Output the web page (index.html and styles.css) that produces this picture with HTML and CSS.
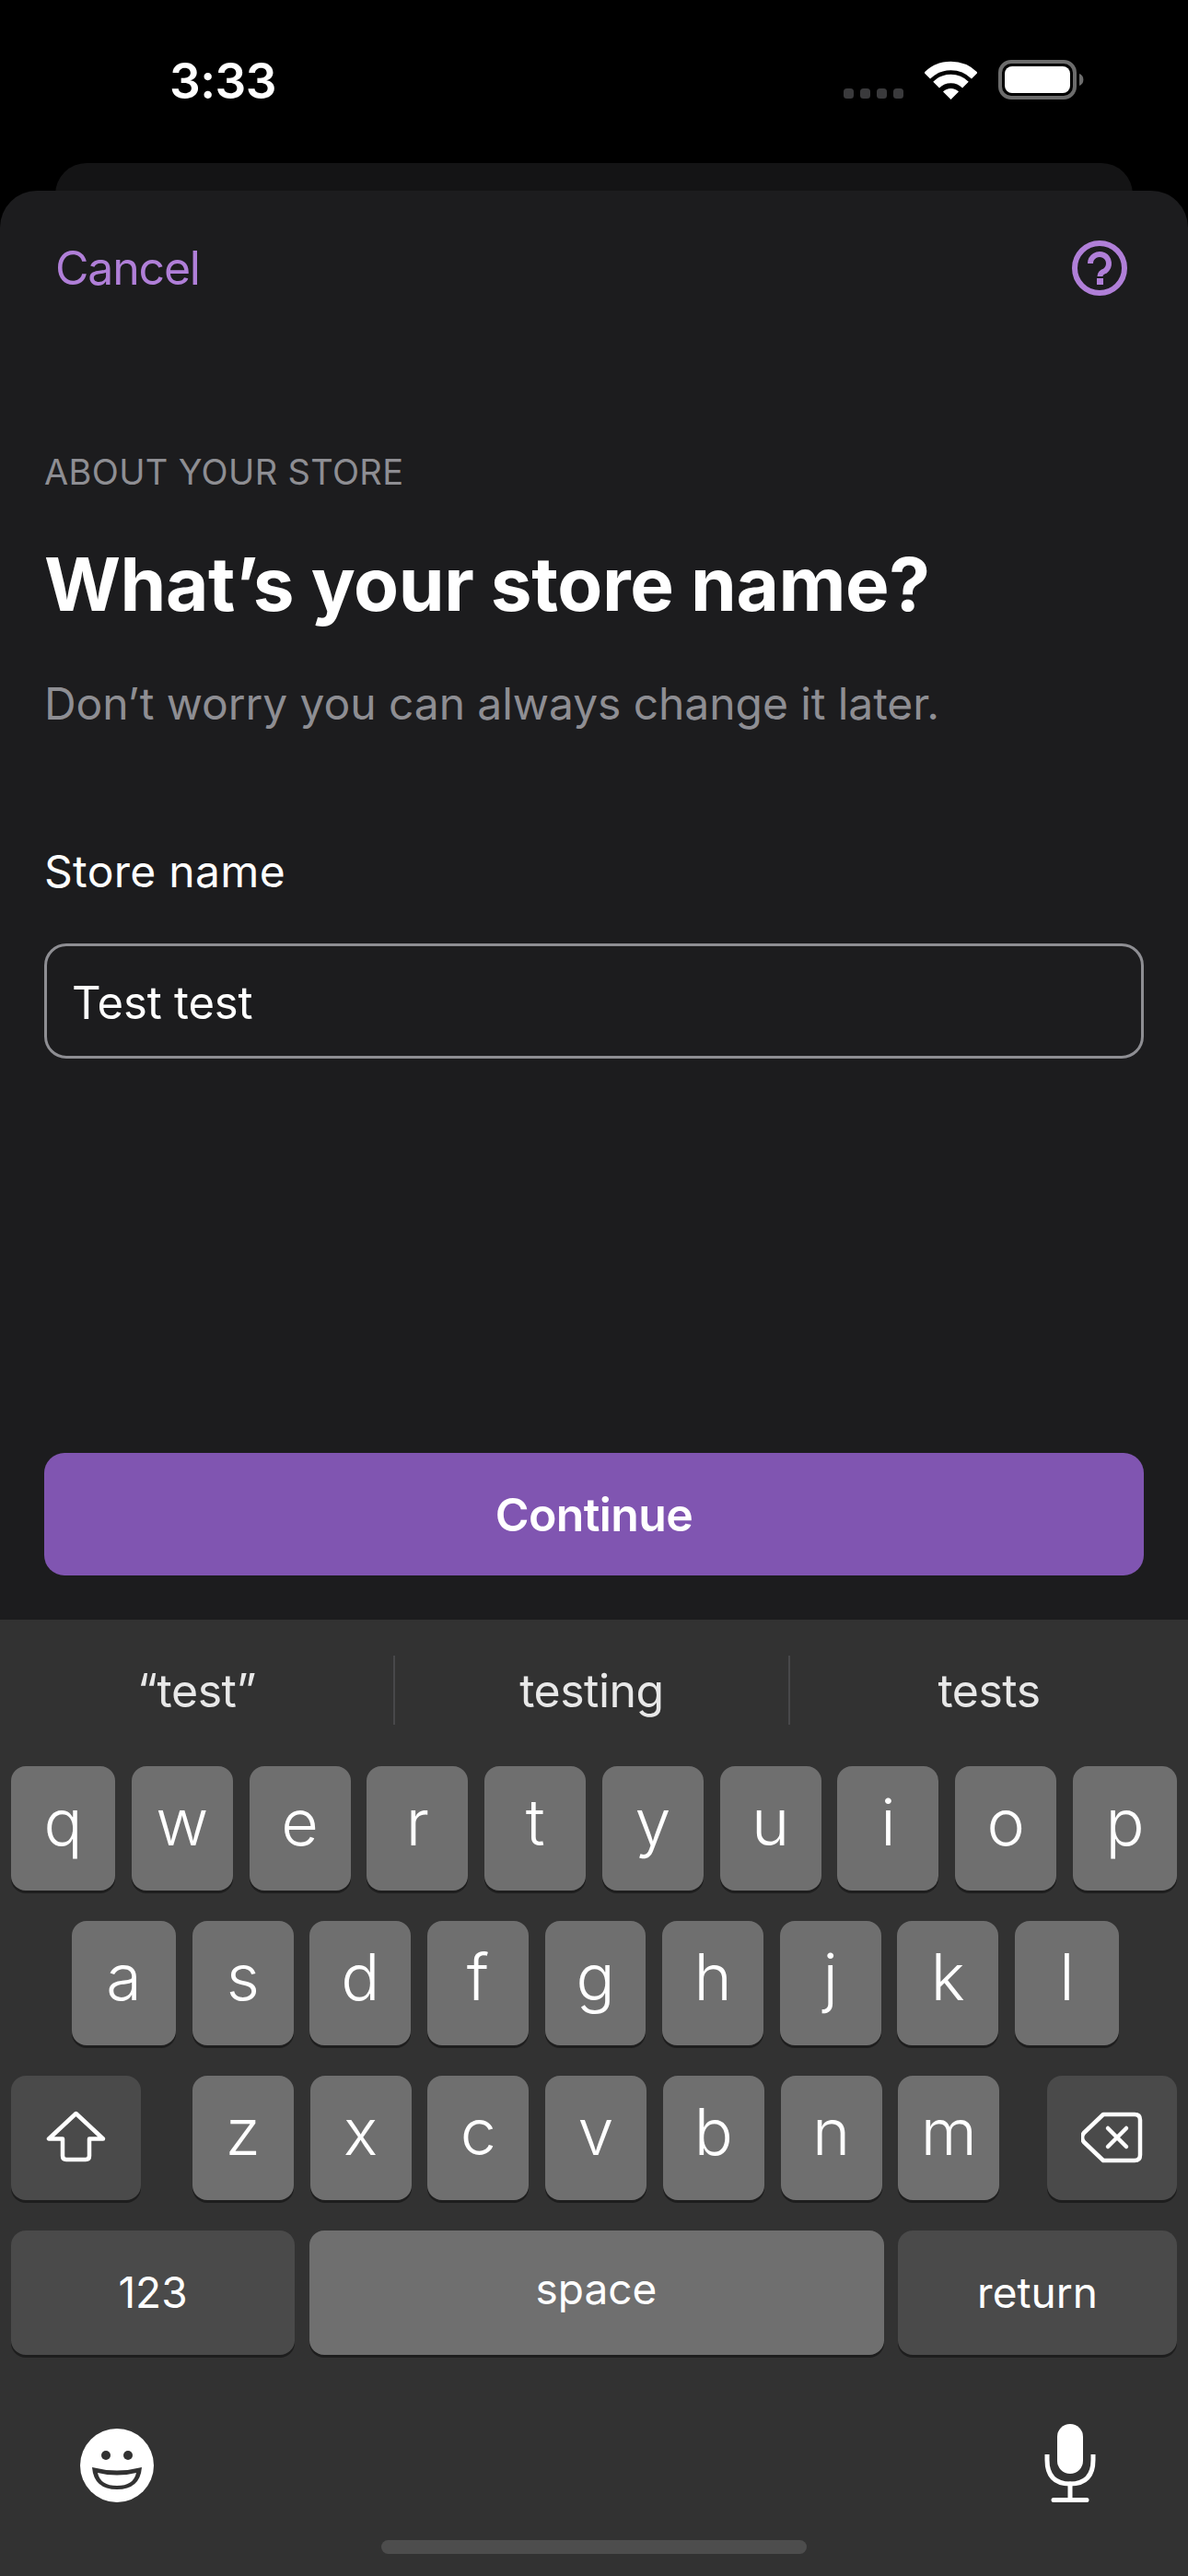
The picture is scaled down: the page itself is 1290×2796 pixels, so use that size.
FILE: index.html

```html
<!DOCTYPE html>
<html lang="en">
<head>
  <meta charset="UTF-8">
  <title>Store name</title>
  <link rel="stylesheet" href="styles.css">
</head>
<body>
  <div class="status-bar">
    <span class="time">3:33</span>
    <div class="status-icons">
      <svg class="signal" width="65" height="11" viewBox="0 0 65 11">
        <rect x="0" width="11" height="11" rx="3.5"/>
        <rect x="18" width="11" height="11" rx="3.5"/>
        <rect x="36" width="11" height="11" rx="3.5"/>
        <rect x="54" width="11" height="11" rx="3.5"/>
      </svg>
      <svg width="57" height="42" viewBox="0 0 57 42">
        <path d="M2.7 16.2A36.5 36.5 0 0 1 54.3 16.2M12.6 26.1A22.5 22.5 0 0 1 44.4 26.1" fill="none" stroke="#fff" stroke-width="9.5"/>
        <path d="M28.5 42L20 33.5A12 12 0 0 1 37 33.5Z" fill="#fff"/>
      </svg>
      <svg width="93" height="43" viewBox="0 0 93 43">
        <rect x="2" y="2" width="81" height="39" rx="12" fill="none" stroke="#6c6c6c" stroke-width="4"/>
        <rect x="7" y="7" width="71" height="29" rx="8" fill="#fff"/>
        <path d="M88 15a7 7 0 0 1 0 13Z" fill="#6c6c6c"/>
      </svg>
    </div>
  </div>

  <div class="back-card"></div>

  <div class="sheet">
    <div class="nav">
      <span class="cancel">Cancel</span>
      <svg width="60" height="60" viewBox="0 0 60 60" fill="none" stroke="#b07fd8" stroke-width="6">
        <circle cx="30" cy="30" r="27"/>
        <path d="M20 25A10 10 0 1 1 36 33Q30.500 35 30.500 39"/>
        <rect x="27" y="41" width="7" height="7" fill="#b07fd8" stroke="none"/>
      </svg>
    </div>

    <div class="eyebrow">ABOUT YOUR STORE</div>
    <h1 class="title">What’s your store name?</h1>
    <p class="subtitle">Don’t worry you can always change it later.</p>

    <div class="field-label">Store name</div>
    <div class="field">Test test</div>

    <div class="continue">Continue</div>
  </div>

  <div class="keyboard">
    <div class="suggestions">
      <div class="suggestion">“test”</div>
      <div class="suggestion">testing</div>
      <div class="suggestion">tests</div>
    </div>

    <div class="key-row">
      <div class="key edge">q</div>
      <div class="key">w</div>
      <div class="key">e</div>
      <div class="key">r</div>
      <div class="key">t</div>
      <div class="key">y</div>
      <div class="key">u</div>
      <div class="key">i</div>
      <div class="key">o</div>
      <div class="key edge">p</div>
    </div>
    <div class="key-row home-row">
      <div class="key edge">a</div>
      <div class="key">s</div>
      <div class="key">d</div>
      <div class="key">f</div>
      <div class="key">g</div>
      <div class="key">h</div>
      <div class="key">j</div>
      <div class="key">k</div>
      <div class="key edge">l</div>
    </div>
    <div class="key-row">
      <div class="key action shift">
        <svg width="65" height="56" viewBox="0 0 65 56" fill="none" stroke="#fff" stroke-width="4.5" stroke-linejoin="round">
          <path d="M32.500 3L3 30.500H18V49Q18 53 22 53H43Q47 53 47 49V30.500H62Z"/>
        </svg>
      </div>
      <div class="key">z</div>
      <div class="key">x</div>
      <div class="key">c</div>
      <div class="key">v</div>
      <div class="key">b</div>
      <div class="key">n</div>
      <div class="key">m</div>
      <div class="key action delete">
        <svg width="67" height="56" viewBox="0 0 67 56" fill="none" stroke="#fff" stroke-width="4.5" stroke-linejoin="round" stroke-linecap="round">
          <path d="M24 3H58Q64 3 64 9V47Q64 53 58 53H24L3 33Q-1 28 3 23Z"/>
          <path d="M29 18L49 38M49 18L29 38"/>
        </svg>
      </div>
    </div>
    <div class="key-row bottom-row">
      <div class="key action numbers">123</div>
      <div class="key space">space</div>
      <div class="key action return">return</div>
    </div>

    <div class="kb-icons">
      <svg width="80" height="80" viewBox="0 0 80 80">
        <circle cx="40" cy="40" r="40" fill="#fff"/>
        <circle cx="28" cy="29" r="5" fill="#323232"/>
        <circle cx="52" cy="29" r="5" fill="#323232"/>
        <path d="M13 42Q40 49 67 42Q65 66 40 66Q15 66 13 42Z" fill="#323232"/>
        <path d="M19 48Q40 53 61 48Q58 62 40 62Q22 62 19 48Z" fill="#fff"/>
      </svg>
      <svg width="56" height="85" viewBox="0 0 56 85" fill="none" stroke="#fff" stroke-width="5" stroke-linecap="round">
        <rect x="14" y="0" width="28" height="54" rx="14" fill="#fff" stroke="none"/>
        <path d="M3 33V39Q3 65 28 65Q53 65 53 39V33" stroke-linecap="butt"/>
        <path d="M28 65V82M10 82.500H46"/>
      </svg>
    </div>
    <div class="home-bar"></div>
  </div>
</body>
</html>
```

FILE: styles.css

```css
* {
  box-sizing: border-box;
}
body {
  margin: 0;
  width: 1290px;
  height: 2796px;
  background: #000;
  color: #fff;
  font-family: Inter, "Liberation Sans", sans-serif;
  display: flex;
  flex-direction: column;
  overflow: hidden;
}
.status-bar {
  height: 147px;
  padding: 65px 113px 0 184px;
  display: flex;
  justify-content: space-between;
  align-items: flex-start;
}
.time {
  font-size: 53px;
  font-weight: 600;
  letter-spacing: -0.5px;
  line-height: 46px;
}
.status-icons {
  display: flex;
  align-items: flex-end;
  gap: 23px;
}
.signal {
  fill: #3a3a3c;
  margin-bottom: 1px;
}
.back-card {
  height: 60px;
  margin: 30px 60px -30px;
  background: #141415;
  border-radius: 34px 34px 0 0;
}
.sheet {
  height: 1551px;
  background: #1c1c1e;
  border-radius: 40px 40px 0 0;
  padding: 0 48px 48px;
  display: flex;
  flex-direction: column;
  position: relative;
}
.nav {
  padding: 54px 18px 0 12px;
  display: flex;
  justify-content: space-between;
  align-items: center;
}
.cancel {
  font-size: 50px;
  letter-spacing: -1.2px;
  color: #b07fd8;
  line-height: 60px;
}
.eyebrow {
  margin-top: 168px;
  font-size: 38px;
  letter-spacing: 0.35px;
  line-height: 46px;
  color: #8e8e93;
}
.title {
  margin: 51px 0 0;
  font-size: 80px;
  font-weight: 700;
  letter-spacing: -0.4px;
  line-height: 96px;
}
.subtitle {
  margin: 52px 0 0;
  font-size: 48px;
  letter-spacing: -0.08px;
  line-height: 60px;
  color: #8e8e93;
}
.field-label {
  margin-top: 122px;
  font-size: 48px;
  letter-spacing: 0.3px;
  line-height: 60px;
}
.field {
  margin-top: 48px;
  height: 125px;
  border: 3px solid #8e8e93;
  border-radius: 24px;
  padding: 4px 27px 0;
  font-size: 49px;
  letter-spacing: -0.2px;
  display: flex;
  align-items: center;
}
.continue {
  margin-top: auto;
  height: 133px;
  background: #8055b1;
  border-radius: 22px;
  font-size: 50px;
  font-weight: 600;
  letter-spacing: -0.6px;
  display: flex;
  align-items: center;
  justify-content: center;
}
.keyboard {
  flex: 1;
  background: #323232;
  padding-top: 39px;
}
.suggestions {
  display: flex;
  height: 75px;
  margin-bottom: 45px;
}
.suggestion {
  flex: 1;
  font-size: 50px;
  letter-spacing: -0.5px;
  color: #e8e8e8;
  display: flex;
  align-items: center;
  justify-content: center;
}
.suggestion:first-child {
  flex: none;
  width: 427px;
}
.suggestion:nth-child(2) {
  flex: none;
  width: 429px;
}
.suggestion + .suggestion {
  border-left: 2px solid #48484a;
}
.key-row {
  display: flex;
  gap: 17.8px;
  padding: 0 12px;
  margin-bottom: 33px;
}
.home-row {
  padding: 0 75px 0 78px;
}
.bottom-row {
  gap: 15.5px;
}
.key {
  flex: 1;
  height: 135px;
  background: #6f6f6f;
  border-radius: 16px;
  box-shadow: 0 3px 0 #1e1e1e;
  font-size: 70px;
  font-weight: 300;
  padding-bottom: 14px;
  display: flex;
  align-items: center;
  justify-content: center;
}
.key.edge {
  flex: none;
  width: 113px;
}
.key.action {
  background: #4a4a4a;
}
.shift, .delete {
  flex: none;
  width: 141px;
}
.key.shift {
  margin-right: 38px;
  padding-bottom: 4px;
}
.key.delete {
  margin-left: 34px;
  padding-bottom: 2px;
}
.numbers, .return, .space {
  font-size: 46px;
  font-weight: 400;
}
.key.numbers, .key.return {
  padding-bottom: 2px;
}
.key.space {
  padding-bottom: 10px;
}
.numbers {
  flex: none;
  width: 308px;
}
.return {
  flex: none;
  width: 303px;
}
.kb-icons {
  margin-top: 75px;
  padding: 0 100px 0 87px;
  display: flex;
  justify-content: space-between;
  align-items: flex-end;
}
.home-bar {
  width: 462px;
  height: 15px;
  margin: 41px auto 0;
  background: #4d4d4d;
  border-radius: 8px;
}
```
